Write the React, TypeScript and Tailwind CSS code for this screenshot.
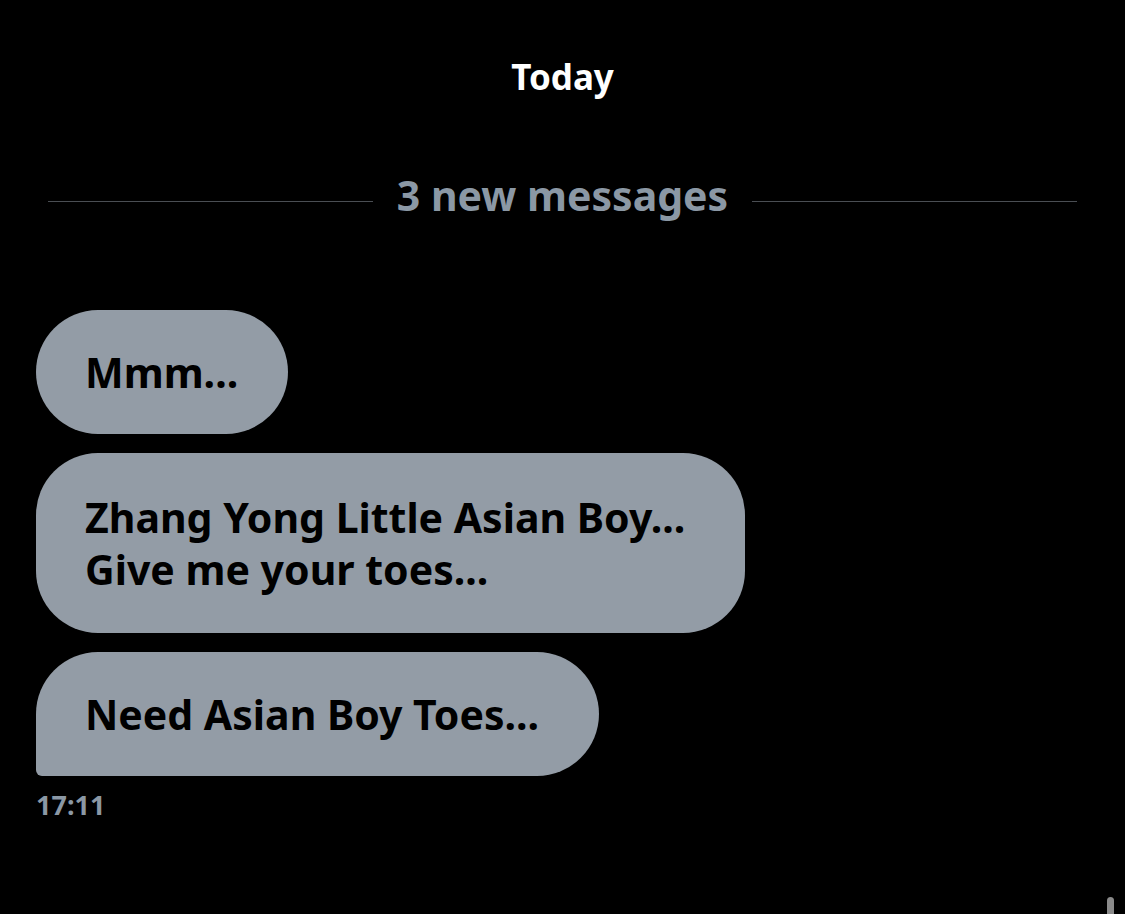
export default function App() {
  const font = { fontFamily: '"Noto Sans", "Open Sans", Arial, sans-serif' };
  return (
    <div className="relative h-[914px] w-[1125px] overflow-hidden bg-black" style={font}>
      {/* Date header */}
      <div className="pt-[55px] text-center text-[35px] font-bold leading-[44px] text-white">Today</div>

      {/* New messages divider */}
      <div className="mt-[70px] flex items-center gap-6 px-12">
        <div className="mt-[12px] h-px flex-1 bg-[#4a4e53]" />
        <div className="text-[41px] font-bold leading-[52px] text-[#8b98a5]">3 new messages</div>
        <div className="mt-[12px] h-px flex-1 bg-[#4a4e53]" />
      </div>

      {/* Messages */}
      <div className="mt-[89px] flex flex-col items-start gap-[19px] px-9">
        <div className="rounded-[62px] bg-[#939ca6] py-[36px] pl-[49px] pr-[50px] text-[41px] font-bold leading-[52px] text-black">
          Mmm...
        </div>
        <div className="rounded-[62px] bg-[#939ca6] py-[38px] pl-[49px] pr-[60px] text-[41px] font-bold leading-[52px] text-black">
          Zhang Yong Little Asian Boy...
          <br />
          Give me your toes...
        </div>
        <div className="rounded-[62px] rounded-bl-[6px] bg-[#939ca6] py-[36px] pl-[49px] pr-[60px] text-[41px] font-bold leading-[52px] text-black">
          Need Asian Boy Toes...
        </div>
      </div>
      <div className="mt-[12px] px-9 text-[27px] font-bold leading-[34px] text-[#8b98a5]">17:11</div>

      {/* Scrollbar thumb */}
      <div className="absolute right-[11px] top-[897px] h-[30px] w-[7px] rounded-full bg-[#8a8a8a]" />
    </div>
  );
}
